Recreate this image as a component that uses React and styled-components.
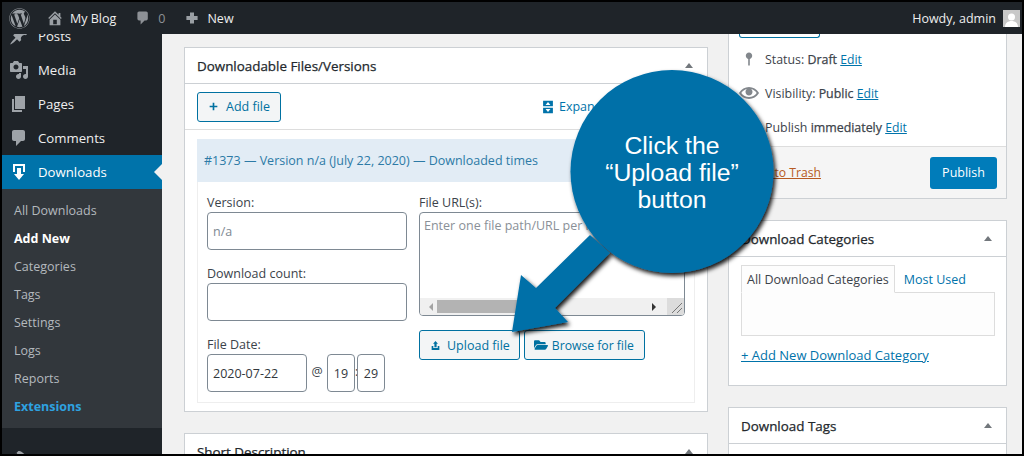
import React from "react";
import styled, { createGlobalStyle } from "styled-components";
import { FaWordpress, FaFolderOpen } from "react-icons/fa";

const UI_FONT = `"Open Sans", "Noto Sans", "Liberation Sans", sans-serif`;

const paths = {
  home: "M16 8.5l1.53 1.53l-1.06 1.06L10 4.62l-6.47 6.47l-1.06-1.06L10 2.5l4 4v-2h2v4zm-6-2.46l6 5.99V18H4v-5.97zM12 17v-5H8v5h4z",
  comment: "M5 2h9c1.1 0 2 .9 2 2v7c0 1.1-.9 2-2 2h-2l-5 5v-5H5c-1.1 0-2-.9-2-2V4c0-1.1.9-2 2-2z",
  plus: "M17 7.5v5h-4.5V17h-5v-4.5H3v-5h4.5V3h5v4.5z",
  plusThin: "M17 8.5v3h-5.5V17h-3v-5.5H3v-3h5.5V3h3v5.5z",
  post: "M10.44 3.02l1.82-1.82 6.36 6.35-1.83 1.82c-1.05-.68-2.48-.57-3.41.36l-.75.75c-.92.93-1.04 2.35-.35 3.41l-1.83 1.82-2.41-2.41-2.8 2.79c-.42.42-3.38 2.71-3.8 2.29s1.86-3.39 2.28-3.81l2.79-2.79L4.1 9.36l1.83-1.82c1.05.69 2.48.57 3.4-.36l.75-.75c.93-.92 1.05-2.35.36-3.41z",
  media: "M13 11V4c0-.55-.45-1-1-1h-1.67L9 1H5L3.67 3H2c-.55 0-1 .45-1 1v7c0 .55.45 1 1 1h10c.55 0 1-.45 1-1zM7 4.5c1.38 0 2.5 1.12 2.5 2.5S8.38 9.5 7 9.5 4.5 8.38 4.5 7 5.62 4.5 7 4.5zM14 6h5v10.5c0 1.38-1.12 2.5-2.5 2.5S14 17.88 14 16.5s1.12-2.5 2.5-2.5c.17 0 .34.02.5.05V9h-3V6zm-4 8.05V13h2v3.5c0 1.38-1.12 2.5-2.5 2.5S7 17.88 7 16.5 8.12 14 9.5 14c.17 0 .34.02.5.05z",
  page: "M6 15V2h10v13H6zm-1 1h8v2H3V5h2v11z",
  download: "M14.01 4v6h2V2H4v8h2.01V4h8zm-2 2v6h3l-5 6-5-6h3V6h4z",
  brush: "M14.5 11L7.4 4l1.5-1.5c.5-.6 2.3-.5 3.5.3 1.2.8 1.4 1.3 2.9 2.1 1.2.6 2.5 1.3 4.5.9zM6.7 4.7l7 7-3 3-2-2-4 5-3-3 3-3.5c.4-.4.4-1 0-1.4L3.6 8.7c-.4-.4-.4-1 0-1.4z",
  eye: "M19.7 9.4C17.7 6 14 3.9 10 3.9S2.3 6 .3 9.4L0 10l.3.6c2 3.4 5.7 5.5 9.7 5.5s7.7-2.1 9.7-5.5l.3-.6-.3-.6zM10 14.1c-3.1 0-6-1.6-7.7-4.1C3.6 8 5.7 6.6 8 6.1c-.9.6-1.5 1.7-1.5 2.9 0 1.9 1.6 3.5 3.5 3.5s3.5-1.6 3.5-3.5c0-1.2-.6-2.3-1.5-2.9 2.3.5 4.4 1.9 5.7 3.9-1.7 2.5-4.6 4.1-7.7 4.1z",
  pin: "M14 6c0-2.2-1.8-4-4-4S6 3.8 6 6c0 1.8 1.2 3.4 3 3.9V18h2V9.9c1.8-.5 3-2.1 3-3.9z",
  upload: "M10 2l4.5 5H12v6H8V7H5.5zM3 11h3v3.5h8V11h3v7H3z",
  expand: "M3 1h14v18H3zM10 3L6.5 7h7zM3 9v2h14V9zM6.5 13l3.5 4 3.5-4z",
};

const Icon = ({ name, size = 20, color = "currentColor" }) => (
  <svg width={size} height={size} viewBox="0 0 20 20" fill={color} fillRule="evenodd" style={{ flex: "none" }}>
    <path d={paths[name]} />
  </svg>
);

const GlobalStyle = createGlobalStyle`
  html, body { margin: 0; padding: 0; background: #000; }
  * { box-sizing: border-box; }
`;

const Frame = styled.div`
  position: relative;
  width: 1024px;
  height: 456px;
  border: 2px solid #000;
  overflow: hidden;
  background: #f1f1f1;
  font-family: ${UI_FONT};
  font-size: 13px;
  color: #3c434a;
`;

const AdminBar = styled.header`
  display: flex;
  align-items: center;
  height: 32px;
  padding: 0 2px 0 7px;
  background: #1f2429;
  color: #eee;
  font-size: 12.5px;
`;

const BarItem = styled.span`
  display: flex;
  align-items: center;
  gap: ${(p) => p.$gap || 7}px;
  margin-right: ${(p) => p.$after || 0}px;
  margin-left: ${(p) => (p.$end ? "auto" : 0)};
  color: ${(p) => p.$dim ? "#8d9196" : "#eee"};
`;

const Avatar = styled.span`
  flex: none;
  width: 17px;
  height: 17px;
  background: #c8c8c8;
  display: flex;
  align-items: flex-end;
  justify-content: center;
  overflow: hidden;
`;

const Body = styled.div`
  display: flex;
  height: 420px;
`;

const Sidebar = styled.nav`
  flex: none;
  width: 160px;
  background: #1f2429;
  overflow: hidden;
`;

const MenuList = styled.div`
  margin-top: -15px;
`;

const MenuItem = styled.div`
  position: relative;
  display: flex;
  align-items: center;
  gap: 9px;
  height: 34px;
  margin-top: ${(p) => p.$before || 0}px;
  padding-left: 7px;
  font-size: 13.2px;
  color: ${(p) => (p.$active ? "#fff" : "#eee")};
  background: ${(p) => (p.$active ? "#0073aa" : "transparent")};

  ${(p) => p.$active && `
    &::after {
      content: "";
      position: absolute;
      right: 0;
      top: 9px;
      border: 8px solid transparent;
      border-right-color: #f1f1f1;
    }
  `}
`;

const SubMenu = styled.div`
  display: flex;
  flex-direction: column;
  padding: 8px 0 7px 12px;
  background: #32373c;
`;

const SubItem = styled.div`
  height: 28px;
  line-height: 28px;
  font-size: 12.5px;
  font-weight: ${(p) => (p.$strong || p.$accent ? 700 : 400)};
  color: ${(p) => (p.$accent ? "#2ea2e0" : p.$strong ? "#fff" : "#b4b9be")};
`;

const Content = styled.main`
  flex: 1;
  display: flex;
  gap: 20px;
  padding: 13px 15px 0 22px;
  overflow: hidden;
`;

const MainColumn = styled.div`
  flex: none;
  width: 524px;
  display: flex;
  flex-direction: column;
  gap: 21px;
`;

const SideColumn = styled.div`
  flex: none;
  width: 279px;
  margin-top: -14px;
  display: flex;
  flex-direction: column;
  gap: 21px;
`;

const Box = styled.section`
  flex: none;
  background: #fff;
  border: 1px solid #ccd0d4;
`;

const BoxHead = styled.div`
  display: flex;
  align-items: center;
  justify-content: space-between;
  height: 36px;
  padding: 0 14px 0 12px;
  border-bottom: 1px solid #ccd0d4;
  font-size: 13.4px;
  color: #23282d;
  -webkit-text-stroke: 0.25px #23282d;
`;

const Caret = styled.span`
  width: 0;
  height: 0;
  border: 4px solid transparent;
  border-top: 0;
  border-bottom: 5px solid #72777c;
`;

const Toolbar = styled.div`
  display: flex;
  align-items: center;
  height: 46px;
  padding: 0 12px;
  border-bottom: 1px solid #ddd;
  white-space: nowrap;
  overflow: hidden;
`;

const Button = styled.span`
  display: inline-flex;
  align-items: center;
  gap: ${(p) => p.$gap || 7}px;
  height: 30px;
  padding: 0 ${(p) => p.$padR || 10}px 0 ${(p) => p.$padL || 10}px;
  border: 1px solid #0071a1;
  border-radius: 3px;
  background: #f3f5f6;
  color: #0071a1;
  font-size: ${(p) => p.$size || 12.5}px;
  white-space: nowrap;
`;

const ExpandLink = styled.span`
  display: flex;
  align-items: center;
  gap: 4px;
  margin-left: 260px;
  color: #0073aa;
  font-size: 12.5px;
`;

const Repeatable = styled.div`
  margin: 9px 12px 8px;
  border: 1px solid #eee;
  border-top: 0;
`;

const RowHead = styled.div`
  display: flex;
  align-items: center;
  height: 43px;
  margin: 0 -1px;
  padding-left: 7px;
  background: #e2ecf5;
  color: #2c7aa6;
  font-size: 12.5px;
`;

const RowForm = styled.div`
  display: grid;
  grid-template-columns: 200px 266px;
  column-gap: 12px;
  padding: 12px 9px 10px;
`;

const Stack = styled.div`
  display: flex;
  flex-direction: column;
`;

const Label = styled.div`
  height: 18px;
  line-height: 18px;
  font-size: 12.5px;
`;

const Field = styled.div`
  display: flex;
  flex: none;
  align-items: center;
  justify-content: ${(p) => (p.$center ? "center" : "flex-start")};
  width: ${(p) => p.$w || 200}px;
  height: 38px;
  margin-bottom: ${(p) => p.$after || 0}px;
  padding: 0 ${(p) => (p.$center ? 0 : 5)}px;
  border: 1px solid #7e8993;
  border-radius: 4px;
  background: #fff;
  font-size: 12.5px;
  color: ${(p) => p.$muted ? "#7e8993" : "#32373c"};
`;

const DateRow = styled.div`
  display: flex;
  align-items: center;
`;

const DateSep = styled.span`
  flex: none;
  width: ${(p) => p.$w}px;
  padding-bottom: 4px;
  text-align: center;
  font-size: 12.5px;
`;

const TextArea = styled.div`
  display: flex;
  flex-direction: column;
  justify-content: space-between;
  height: 104px;
  margin-bottom: 14px;
  border: 1px solid #7e8993;
  border-radius: 4px;
  overflow: hidden;
`;

const Placeholder = styled.div`
  padding: 4px;
  font-size: 12.5px;
  color: #8a9097;
  white-space: nowrap;
`;

const HScroll = styled.div`
  display: flex;
  align-items: center;
  height: 17px;
  background: #f0f0f0;
`;

const ScrollThumb = styled.div`
  width: 90px;
  height: 13px;
  margin-left: 4px;
  background: #b3b3b3;
`;

const ScrollArrow = styled.span`
  margin-left: ${(p) => p.$left}px;
  border: 4px solid transparent;
  border-${(p) => (p.$dir === "left" ? "right" : "left")}-color: ${(p) => (p.$dir === "left" ? "#a3a3a3" : "#333")};
`;

const Grip = styled.svg`
  flex: none;
  margin-left: auto;
  background: #dcdcdc;
`;

const Buttons = styled.div`
  display: flex;
  gap: 4px;
`;

const PublishTop = styled.div`
  display: flex;
  flex-direction: column;
  padding: 0 10px;
  height: 112px;
`;

const CutButton = styled.div`
  flex: none;
  width: 81px;
  height: 4px;
  margin-bottom: 4px;
  border: 1px solid #0071a1;
  border-top: 0;
  border-radius: 0 0 3px 3px;
`;

const MetaRow = styled.div`
  display: flex;
  flex: none;
  align-items: center;
  gap: 7px;
  height: 34px;
  font-size: 12.4px;
  white-space: nowrap;

  b {
    font-weight: 400;
    -webkit-text-stroke: 0.25px #3c434a;
  }
`;

const MetaIcon = styled.span`
  display: flex;
  justify-content: center;
  width: 19px;
  color: #82878c;
`;

const TextLink = styled.a`
  color: ${(p) => p.$danger ? "#b75a22" : "#0073aa"};
  text-decoration: underline;
  font-size: ${(p) => p.$size || 12.2}px;
`;

const PublishFoot = styled.div`
  display: flex;
  align-items: center;
  justify-content: space-between;
  height: 52px;
  padding: 0 9px 0 11px;
  border-top: 1px solid #ddd;
  background: #f5f5f5;
`;

const PrimaryButton = styled.span`
  display: flex;
  align-items: center;
  justify-content: center;
  width: 67px;
  height: 32px;
  border-radius: 3px;
  background: #007cba;
  color: #fff;
  font-size: 12.5px;
`;

const BoxBody = styled.div`
  padding: 8px 11px 0 12px;
  height: ${(p) => p.$h}px;
`;

const Tabs = styled.div`
  display: flex;
  align-items: flex-end;
  height: 28px;
  margin-bottom: -1px;
  position: relative;
`;

const Tab = styled.span`
  display: flex;
  align-items: center;
  height: 28px;
  padding: 0 5px;
  font-size: 12.5px;
  color: ${(p) => (p.$active ? "#3c434a" : "#0073aa")};
  background: ${(p) => (p.$active ? "#fdfdfd" : "transparent")};
  border: 1px solid ${(p) => (p.$active ? "#ddd" : "transparent")};
  border-bottom: ${(p) => (p.$active ? "1px solid #fdfdfd" : "0")};
  margin-left: ${(p) => (p.$active ? 0 : 3)}px;
`;

const TabPanel = styled.div`
  height: 44px;
  margin-bottom: 10px;
  border: 1px solid #ddd;
  background: #fdfdfd;
`;

const CalloutLayer = styled.div`
  position: absolute;
  left: 0;
  top: 0;
  width: 1020px;
  height: 452px;
  pointer-events: none;
`;

const CalloutText = styled.div`
  position: absolute;
  left: 570px;
  top: 130px;
  width: 200px;
  text-align: center;
  font-family: "Liberation Sans", Arial, sans-serif;
  font-size: 24.8px;
  line-height: 27px;
  color: #fff;
`;

const App = () => (
  <>
    <GlobalStyle />
    <Frame>
      <AdminBar>
        <BarItem $after={16}>
          <FaWordpress size={21} color="#9a9fa4" />
        </BarItem>
        <BarItem $after={19} $gap={6}>
          <Icon name="home" size={18} color="#9a9fa4" />
          My Blog
        </BarItem>
        <BarItem $after={19} $dim>
          <Icon name="comment" size={16} color="#8d9196" />0
        </BarItem>
        <BarItem>
          <Icon name="plus" size={16} color="#9a9fa4" />
          New
        </BarItem>
        <BarItem $end>
          Howdy, admin
          <Avatar>
            <svg width="13" height="15" viewBox="0 0 13 15" fill="#fff">
              <circle cx="6.5" cy="5" r="3.5" />
              <path d="M0 15c0-4 3-6 6.5-6s6.5 2 6.5 6z" />
            </svg>
          </Avatar>
        </BarItem>
      </AdminBar>
      <Body>
        <Sidebar>
          <MenuList>
            <MenuItem><Icon name="post" color="#9ea3a8" />Posts</MenuItem>
            <MenuItem><Icon name="media" color="#9ea3a8" />Media</MenuItem>
            <MenuItem><Icon name="page" color="#9ea3a8" />Pages</MenuItem>
            <MenuItem><Icon name="comment" color="#9ea3a8" />Comments</MenuItem>
            <MenuItem $active><Icon name="download" color="#fff" />Downloads</MenuItem>
            <SubMenu>
              <SubItem>All Downloads</SubItem>
              <SubItem $strong>Add New</SubItem>
              <SubItem>Categories</SubItem>
              <SubItem>Tags</SubItem>
              <SubItem>Settings</SubItem>
              <SubItem>Logs</SubItem>
              <SubItem>Reports</SubItem>
              <SubItem $accent>Extensions</SubItem>
            </SubMenu>
            <MenuItem $before={14}><Icon name="brush" color="#9ea3a8" />Appearance</MenuItem>
          </MenuList>
        </Sidebar>
        <Content>
          <MainColumn>
            <Box>
              <BoxHead>
                Downloadable Files/Versions
                <Caret />
              </BoxHead>
              <Toolbar>
                <Button>
                  <Icon name="plusThin" size={11} />
                  Add file
                </Button>
                <ExpandLink>
                  <Icon name="expand" size={14} />
                  Expand / Collapse All
                </ExpandLink>
              </Toolbar>
              <Repeatable>
                <RowHead>#1373 — Version n/a (July 22, 2020) — Downloaded times</RowHead>
                <RowForm>
                  <Stack>
                    <Label>Version:</Label>
                    <Field $muted $after={15}>n/a</Field>
                    <Label>Download count:</Label>
                    <Field $after={15} />
                    <Label>File Date:</Label>
                    <DateRow>
                      <Field $w={100}>2020-07-22</Field>
                      <DateSep $w={20}>@</DateSep>
                      <Field $w={28} $center>19</Field>
                      <DateSep $w={2}>:</DateSep>
                      <Field $w={28} $center>29</Field>
                    </DateRow>
                  </Stack>
                  <Stack>
                    <Label>File URL(s):</Label>
                    <TextArea>
                      <Placeholder>Enter one file path/URL per line</Placeholder>
                      <HScroll>
                        <ScrollArrow $dir="left" $left={5} />
                        <ScrollThumb />
                        <ScrollArrow $dir="right" $left={125} />
                        <Grip width="17" height="17" viewBox="0 0 17 17" stroke="#777" fill="none">
                          <path d="M5 15L15 5M10 15l5-5" />
                        </Grip>
                      </HScroll>
                    </TextArea>
                    <Buttons>
                      <Button $gap={6} $padR={9}>
                        <Icon name="upload" size={11} />
                        Upload file
                      </Button>
                      <Button $gap={4} $padL={9} $size={12.2}>
                        <FaFolderOpen size={14} />
                        Browse for file
                      </Button>
                    </Buttons>
                  </Stack>
                </RowForm>
              </Repeatable>
            </Box>
            <Box>
              <BoxHead>
                Short Description
                <Caret />
              </BoxHead>
            </Box>
          </MainColumn>
          <SideColumn>
            <Box>
              <PublishTop>
                <CutButton />
                <MetaRow>
                  <MetaIcon><Icon name="pin" size={16} /></MetaIcon>
                  <span>Status: <b>Draft</b> <TextLink>Edit</TextLink></span>
                </MetaRow>
                <MetaRow>
                  <MetaIcon><Icon name="eye" size={20} /></MetaIcon>
                  <span>Visibility: <b>Public</b> <TextLink>Edit</TextLink></span>
                </MetaRow>
                <MetaRow>
                  <MetaIcon />
                  <span>Publish <b>immediately</b> <TextLink>Edit</TextLink></span>
                </MetaRow>
              </PublishTop>
              <PublishFoot>
                <TextLink $danger>Move to Trash</TextLink>
                <PrimaryButton>Publish</PrimaryButton>
              </PublishFoot>
            </Box>
            <Box>
              <BoxHead>
                Download Categories
                <Caret />
              </BoxHead>
              <BoxBody $h={128}>
                <Tabs>
                  <Tab $active>All Download Categories</Tab>
                  <Tab>Most Used</Tab>
                </Tabs>
                <TabPanel />
                <TextLink $size={13}>+ Add New Download Category</TextLink>
              </BoxBody>
            </Box>
            <Box>
              <BoxHead>
                Download Tags
                <Caret />
              </BoxHead>
              <BoxBody $h={60} />
            </Box>
          </SideColumn>
        </Content>
      </Body>
      <CalloutLayer>
        <svg width="1020" height="452" viewBox="2 2 1020 452">
          <defs>
            <filter id="callout-shadow" x="-20%" y="-20%" width="140%" height="140%">
              <feDropShadow dx="2" dy="3" stdDeviation="2" floodColor="#000" floodOpacity="0.9" />
            </filter>
          </defs>
          <g filter="url(#callout-shadow)" fill="#006fa8">
            <circle cx="672" cy="171.5" r="101.5" />
            <path d="M590 235L536 288L521 275L512 332L568 322L555 308L610 253z" />
          </g>
        </svg>
        <CalloutText>
          Click the
          <br />
          “Upload file”
          <br />
          button
        </CalloutText>
      </CalloutLayer>
    </Frame>
  </>
);

export default App;
